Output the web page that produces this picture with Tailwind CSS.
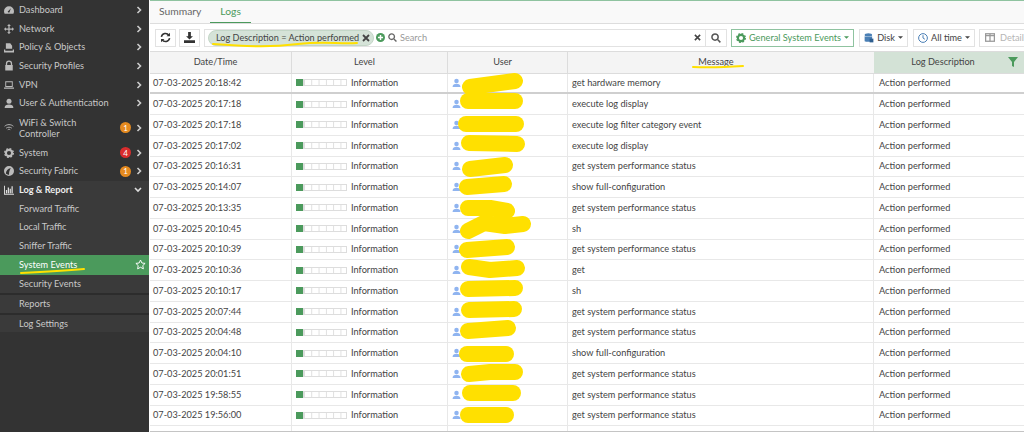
<!DOCTYPE html>
<html lang="en">
<head>
<meta charset="UTF-8" />
<title>System Events</title>
<script src="https://cdn.jsdelivr.net/npm/@tailwindcss/browser@4"></script>
</head>
<body class="bg-white">
<div class="relative flex w-[1024px] h-[432px] overflow-hidden font-['Lato','Open_Sans',sans-serif] text-[9.2px] text-[#444]">

  <!-- Sidebar -->
  <aside class="w-[149px] h-full shrink-0 bg-[#333333] text-[#c8c8c8] flex flex-col pt-[0.5px]">
    <a class="flex items-center h-[18.7px] pl-[4px] pr-[7px]"><svg class="w-[10px] h-[10px] mr-[5px]" viewBox="0 0 16 16" fill="#bbb"><path d="M8 2a8 8 0 0 0-8 8c0 1.500.4 3 1 4h14c.6-1 1-2.500 1-4a8 8 0 0 0-8-8zm1 9a1.500 1.500 0 1 1-1.500-2L11 5l-2 6z"/></svg><span class="flex-1">Dashboard</span><svg class="w-[6px] h-[8px]" viewBox="0 0 6 8" fill="none" stroke="#ccc" stroke-width="1.600"><path d="M1.500 1l3 3-3 3"/></svg></a>
    <a class="flex items-center h-[18.7px] pl-[4px] pr-[7px]"><svg class="w-[10px] h-[10px] mr-[5px]" viewBox="0 0 16 16" fill="#bbb"><path d="M8 0l3 3H9v4h4V5l3 3-3 3V9H9v4h2l-3 3-3-3h2V9H3v2L0 8l3-3v2h4V3H5z"/></svg><span class="flex-1">Network</span><svg class="w-[6px] h-[8px]" viewBox="0 0 6 8" fill="none" stroke="#ccc" stroke-width="1.600"><path d="M1.500 1l3 3-3 3"/></svg></a>
    <a class="flex items-center h-[18.7px] pl-[4px] pr-[7px]"><svg class="w-[10px] h-[11px] mr-[5px]" viewBox="0 0 16 16" fill="#bbb"><path d="M3 1h7l3 4v5H3zM0 11h2v2h12v-2h2v5H0z"/></svg><span class="flex-1">Policy &amp; Objects</span><svg class="w-[6px] h-[8px]" viewBox="0 0 6 8" fill="none" stroke="#ccc" stroke-width="1.600"><path d="M1.500 1l3 3-3 3"/></svg></a>
    <a class="flex items-center h-[18.7px] pl-[4px] pr-[7px]"><svg class="w-[10px] h-[11px] mr-[5px]" viewBox="0 0 16 16" fill="#bbb"><path d="M2 7h1V5a5 5 0 0 1 10 0v2h1v9H2zm3 0h6V5a3 3 0 0 0-6 0z"/></svg><span class="flex-1">Security Profiles</span><svg class="w-[6px] h-[8px]" viewBox="0 0 6 8" fill="none" stroke="#ccc" stroke-width="1.600"><path d="M1.500 1l3 3-3 3"/></svg></a>
    <a class="flex items-center h-[18.7px] pl-[4px] pr-[7px]"><svg class="w-[10px] h-[10px] mr-[5px]" viewBox="0 0 16 16" fill="#bbb"><path d="M2 2h12v9H2zm1.500 1.500v6h9v-6zM0 12h16v2H0z" fill-rule="evenodd"/></svg><span class="flex-1">VPN</span><svg class="w-[6px] h-[8px]" viewBox="0 0 6 8" fill="none" stroke="#ccc" stroke-width="1.600"><path d="M1.500 1l3 3-3 3"/></svg></a>
    <a class="flex items-center h-[18.7px] pl-[4px] pr-[7px]"><svg class="w-[10px] h-[11px] mr-[5px]" viewBox="0 0 16 16" fill="#bbb"><circle cx="8" cy="4.500" r="4"/><path d="M1 15c0-4 3-5.500 7-5.500s7 1.500 7 5.500z"/></svg><span class="flex-1">User &amp; Authentication</span><svg class="w-[6px] h-[8px]" viewBox="0 0 6 8" fill="none" stroke="#ccc" stroke-width="1.600"><path d="M1.500 1l3 3-3 3"/></svg></a>
    <a class="flex items-center h-[30.6px] pl-[4px] pr-[7px]"><svg class="w-[10px] h-[9px] mr-[5px]" viewBox="0 0 16 14" fill="none" stroke="#bbb" stroke-width="1.500"><path d="M1 5c4-3.500 10-3.500 14 0M3.500 8c3-2 6-2 9 0M6 10.500c1.200-.8 2.800-.8 4 0"/></svg><span class="flex-1 leading-[11px]">WiFi &amp; Switch<br />Controller</span><span class="w-[11px] h-[11px] rounded-full bg-[#e58a1f] text-white text-[8px] flex items-center justify-center mr-[5px]">1</span><svg class="w-[6px] h-[8px]" viewBox="0 0 6 8" fill="none" stroke="#ccc" stroke-width="1.600"><path d="M1.500 1l3 3-3 3"/></svg></a>
    <a class="flex items-center h-[18.7px] pl-[4px] pr-[7px]"><svg class="w-[10px] h-[10px] mr-[5px]" viewBox="0 0 16 16"><circle cx="8" cy="8" r="5" fill="none" stroke="#bbb" stroke-width="3.400"/><circle cx="8" cy="8" r="7" fill="none" stroke="#bbb" stroke-width="2" stroke-dasharray="3 2.500"/></svg><span class="flex-1">System</span><span class="w-[11px] h-[11px] rounded-full bg-[#d92d2d] text-white text-[8px] flex items-center justify-center mr-[5px]">4</span><svg class="w-[6px] h-[8px]" viewBox="0 0 6 8" fill="none" stroke="#ccc" stroke-width="1.600"><path d="M1.500 1l3 3-3 3"/></svg></a>
    <a class="flex items-center h-[18.7px] pl-[4px] pr-[7px]"><svg class="w-[10px] h-[10px] mr-[5px]" viewBox="0 0 16 16" fill="#bbb"><path d="M8 0a8 8 0 1 0 0 16A8 8 0 0 0 8 0zM3 12c0-4 3-8 8-9-2 3-3 6-3 11-2 0-4-1-5-2z"/></svg><span class="flex-1">Security Fabric</span><span class="w-[11px] h-[11px] rounded-full bg-[#e58a1f] text-white text-[8px] flex items-center justify-center mr-[5px]">1</span><svg class="w-[6px] h-[8px]" viewBox="0 0 6 8" fill="none" stroke="#ccc" stroke-width="1.600"><path d="M1.500 1l3 3-3 3"/></svg></a>
    <a class="flex items-center h-[18.7px] pl-[4px] pr-[7px] bg-[#3a3a3a] text-[#eeeeee] font-bold"><svg class="w-[10px] h-[10px] mr-[5px]" viewBox="0 0 16 16" fill="#ddd"><path d="M0 1h1.500v13H16v1.500H0zM3 8h2v5H3zm3-4h2v9H6zm3 2h2v7H9zm3-4h2v11h-2z"/></svg><span class="flex-1">Log &amp; Report</span><svg class="w-[8px] h-[6px]" viewBox="0 0 8 6" fill="none" stroke="#ddd" stroke-width="1.600"><path d="M1 1l3 3 3-3"/></svg></a>
    <div class="flex flex-col bg-[#3a3a3a]">
      <a class="flex items-center h-[18.7px] pl-[19px]">Forward Traffic</a>
      <a class="flex items-center h-[18.7px] pl-[19px]">Local Traffic</a>
      <a class="flex items-center h-[18.7px] pl-[19px]">Sniffer Traffic</a>
      <a class="flex items-center h-[19.300px] pl-[19px] pr-[3px] bg-[#4b9a5c] text-white"><span class="flex-1">System Events</span><svg class="w-[11px] h-[11px]" viewBox="0 0 16 16" fill="none" stroke="#fff" stroke-width="1.400"><path d="M8 1.500l2 4.300 4.700.6-3.400 3.200.9 4.700L8 12l-4.200 2.300.9-4.700L1.300 6.400 6 5.800z"/></svg></a>
      <a class="flex items-center h-[18.700px] pl-[19px]">Security Events</a>
      <a class="flex items-center h-[19.500px] pl-[19px] border-t-2 border-[#2c2c2c]">Reports</a>
      <a class="flex items-center h-[19.500px] pl-[19px] border-t-2 border-[#2c2c2c]">Log Settings</a>
    </div>
  </aside>

  <!-- Main -->
  <main class="flex-1 min-w-0 flex flex-col border-t border-[#8fc3a0] ml-[1px]">
    <div class="h-[23px] shrink-0 bg-[#f9f9f9] border-b border-[#dddddd] flex items-stretch pl-[1px]">
      <a class="px-[8px] flex items-center text-[10.300px] text-[#666]">Summary</a>
      <a class="ml-[1px] px-[10px] flex items-center text-[10.300px] text-[#4b9a5c] border-b border-[#4b9a5c]">Logs</a>
    </div>

    <div class="h-[27px] shrink-0 flex items-center pl-[5px] gap-[3px] whitespace-nowrap overflow-hidden">
      <button class="w-[21px] h-[18px] shrink-0 border border-[#e2e2e2] flex items-center justify-center"><svg class="w-[11px] h-[11px]" viewBox="0 0 16 16" fill="none" stroke="#333" stroke-width="2.200"><path d="M2 7a6 6 0 0 1 11-2M14 9a6 6 0 0 1-11 2"/><path d="M14.500 1v5h-5zM1.500 15v-5h5z" fill="#333" stroke="none"/></svg></button>
      <button class="w-[21px] h-[18px] shrink-0 border border-[#e2e2e2] flex items-center justify-center"><svg class="w-[11px] h-[11px]" viewBox="0 0 16 16" fill="#333"><path d="M6 0h4v6h3l-5 5-5-5h3zM0 12h16v4H0z"/></svg></button>
      <div class="ml-[1px] w-[523px] h-[18px] shrink-0 border border-[#e2e2e2] flex items-center">
        <span class="ml-[3px] w-[166px] h-[16px] rounded-full bg-[#d5e3d8] border border-[#c3d6c7] text-[#444] flex items-center pl-[7px] pr-[3px]"><span class="flex-1 text-[9.100px]">Log Description = Action performed</span><svg class="w-[8px] h-[8px]" viewBox="0 0 8 8" stroke="#444" stroke-width="1.800"><path d="M1 1l6 6M7 1l-6 6"/></svg></span>
        <svg class="ml-[2px] w-[9px] h-[9px]" viewBox="0 0 16 16"><circle cx="8" cy="8" r="8" fill="#4b9a5c"/><path d="M8 3.500v9M3.500 8h9" stroke="#fff" stroke-width="2.600"/></svg>
        <svg class="ml-[3px] w-[9px] h-[9px]" viewBox="0 0 16 16" fill="none" stroke="#666" stroke-width="2.400"><circle cx="6.500" cy="6.500" r="5"/><path d="M10.500 10.500L15 15"/></svg>
        <span class="ml-[3px] flex-1 text-[#999]">Search</span>
        <svg class="w-[7px] h-[7px] mr-[4px]" viewBox="0 0 8 8" stroke="#444" stroke-width="1.800"><path d="M1 1l6 6M7 1l-6 6"/></svg>
        <span class="w-[21px] h-full border-l border-[#e2e2e2] flex items-center justify-center"><svg class="w-[10px] h-[10px]" viewBox="0 0 16 16" fill="none" stroke="#555" stroke-width="2.400"><circle cx="6.500" cy="6.500" r="5"/><path d="M10.500 10.500L15 15"/></svg></span>
      </div>
      <button class="ml-[1px] w-[123px] h-[18px] shrink-0 border border-[#8fc3a0] text-[#4b9a5c] flex items-center justify-center gap-[3px]"><svg class="w-[10px] h-[10px]" viewBox="0 0 16 16"><circle cx="8" cy="8" r="5" fill="none" stroke="#4b9a5c" stroke-width="3.400"/><circle cx="8" cy="8" r="7" fill="none" stroke="#4b9a5c" stroke-width="2" stroke-dasharray="3 2.500"/></svg>General System Events<svg class="w-[5px] h-[3px]" viewBox="0 0 6 3" fill="#4b9a5c"><path d="M0 0h6L3 3z"/></svg></button>
      <button class="ml-[2px] w-[49px] h-[18px] shrink-0 border border-[#e2e2e2] flex items-center justify-center gap-[3px]"><svg class="w-[10px] h-[10px]" viewBox="0 0 16 16" fill="#4a7fb5"><ellipse cx="7" cy="3" rx="6" ry="2.500"/><path d="M1 5c2 1.500 10 1.500 12 0v8c-2 1.500-10 1.500-12 0z"/><rect x="9" y="9" width="6" height="6" fill="#2f5f8f"/></svg>Disk<svg class="w-[5px] h-[3px]" viewBox="0 0 6 3" fill="#444"><path d="M0 0h6L3 3z"/></svg></button>
      <button class="ml-[2px] w-[62px] h-[18px] shrink-0 border border-[#e2e2e2] flex items-center justify-center gap-[3px]"><svg class="w-[10px] h-[10px]" viewBox="0 0 16 16" fill="none" stroke="#4a7fb5" stroke-width="1.600"><circle cx="8" cy="8" r="7"/><path d="M8 3.500V8l3 2"/></svg>All time<svg class="w-[5px] h-[3px]" viewBox="0 0 6 3" fill="#444"><path d="M0 0h6L3 3z"/></svg></button>
      <button class="ml-[1px] w-[60px] h-[18px] border border-[#e2e2e2] text-[#b5b5b5] flex items-center pl-[5px] gap-[5px] shrink-0"><svg class="w-[10px] h-[9px]" viewBox="0 0 16 14" fill="none" stroke="#999" stroke-width="2"><rect x="1" y="1" width="14" height="12"/><path d="M8 1v12M1 4h14"/></svg>Details</button>
    </div>

    <div class="grid grid-cols-[142px_156px_120px_306px_150px] h-[22.500px] shrink-0 bg-[#f4f4f4] border-y border-[#dcdcdc] text-center">
      <div class="flex items-center justify-center pr-[10px] border-r border-[#dcdcdc]">Date/Time</div>
      <div class="flex items-center justify-center pr-[10px] border-r border-[#dcdcdc]">Level</div>
      <div class="flex items-center justify-center pr-[10px] border-r border-[#dcdcdc]">User</div>
      <div class="flex items-center justify-center pr-[10px]">Message</div>
      <div class="relative flex items-center justify-center pr-[12px] bg-[#d3e2d6]">Log Description<svg class="absolute right-[6px] top-[5px] w-[10px] h-[10px]" viewBox="0 0 10 10" fill="#4b9a5c"><path d="M0 0h10L6 5v5L4 9V5z"/></svg></div>
    </div>

    <div id="rows" class="shrink-0"></div>
    <div class="h-[6.500px] shrink-0 border-b-2 border-[#c4c4c4] grid grid-cols-[142px_156px_120px_306px_150px]">
      <div class="border-r border-[#e8e8e8]"></div>
      <div class="border-r border-[#e8e8e8]"></div>
      <div class="border-r border-[#e8e8e8]"></div>
      <div class="border-r border-[#e8e8e8]"></div>
    </div>
  </main>

  <!-- Yellow marker scribbles drawn over the screenshot -->
  <svg class="absolute left-0 top-0 pointer-events-none" width="1024" height="432" viewBox="0 0 1024 432" fill="none" stroke="#ffe000" stroke-linecap="round" stroke-linejoin="round">
    <g stroke-width="2">
      <path d="M213 44c40 3 60 3 85 0s40 0 59-1"/>
      <path d="M693 67c20 1 35 0 50-1"/>
      <path d="M21 273c20-1 40-2 63-4"/>
    </g>
    <g stroke-width="16">
      <path d="M470 87L515 81"/>
      <path d="M468 101H515"/>
      <path d="M466 124H516"/>
      <path d="M469 143L517 144"/>
      <path d="M470 169L505 165"/>
      <path d="M467 187L504 184"/>
      <path d="M468 208L490 208L507 211"/>
      <path d="M468 231L484 223L505 226L523 224"/>
      <path d="M467 250L507 247"/>
      <path d="M469 267L490 270L517 268"/>
      <path d="M468 289L515 288"/>
      <path d="M469 310L514 309"/>
      <path d="M468 331L508 328"/>
      <path d="M467 354H506"/>
      <path d="M469 374L490 372L515 372"/>
      <path d="M470 393H513"/>
      <path d="M468 415H506"/>
    </g>
  </svg>
</div>

<script>
  const logs = [
    ["07-03-2025 20:18:42", "get hardware memory"],
    ["07-03-2025 20:17:18", "execute log display"],
    ["07-03-2025 20:17:18", "execute log filter category event"],
    ["07-03-2025 20:17:02", "execute log display"],
    ["07-03-2025 20:16:31", "get system performance status"],
    ["07-03-2025 20:14:07", "show full-configuration"],
    ["07-03-2025 20:13:35", "get system performance status"],
    ["07-03-2025 20:10:45", "sh"],
    ["07-03-2025 20:10:39", "get system performance status"],
    ["07-03-2025 20:10:36", "get"],
    ["07-03-2025 20:10:17", "sh"],
    ["07-03-2025 20:07:44", "get system performance status"],
    ["07-03-2025 20:04:48", "get system performance status"],
    ["07-03-2025 20:04:10", "show full-configuration"],
    ["07-03-2025 20:01:51", "get system performance status"],
    ["07-03-2025 19:58:55", "get system performance status"],
    ["07-03-2025 19:56:00", "get system performance status"],
  ];

  const rows = document.getElementById("rows");
  logs.forEach((log, index) => {
    const row = document.createElement("div");
    row.className = index === 0
      ? "grid grid-cols-[142px_156px_120px_306px_150px] h-[20.750px] border-b-2 border-[#cfcfcf]"
      : "grid grid-cols-[142px_156px_120px_306px_150px] h-[20.750px] border-b border-[#e8e8e8]";
    row.innerHTML = `
      <div class="flex items-center pl-[3px] border-r border-[#e8e8e8]">${log[0]}</div>
      <div class="flex items-center pl-[4px] border-r border-[#e8e8e8]">
        <span class="w-[7px] h-[7px] bg-[#4b9a5c]"></span>
        <span class="w-[44px] h-[7px] border border-[#dddddd] bg-[linear-gradient(90deg,#dddddd_1px,transparent_1px)] bg-[length:7.300px_7px]"></span>
        <span class="ml-[4px]">Information</span>
      </div>
      <div class="flex items-center pl-[4px] border-r border-[#e8e8e8]">
        <svg class="w-[9px] h-[10px]" viewBox="0 0 16 16" fill="#8fb4f0"><circle cx="8" cy="4.500" r="4"/><path d="M1 15c0-4 3-5.500 7-5.500s7 1.500 7 5.500z"/></svg>
      </div>
      <div class="flex items-center pl-[4px] border-r border-[#e8e8e8]">${log[1]}</div>
      <div class="flex items-center pl-[5px]">Action performed</div>`;
    rows.appendChild(row);
  });
</script>
</body>
</html>
